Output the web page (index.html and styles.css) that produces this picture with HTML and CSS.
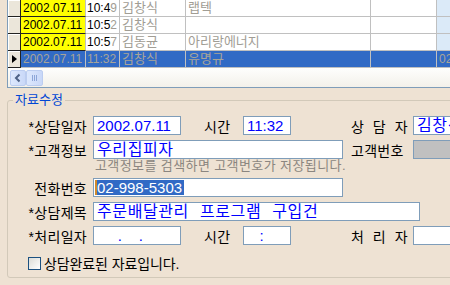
FILE: index.html
```html
<!DOCTYPE html>
<html lang="ko">

<head>
    <meta charset="UTF-8">
    <title>상담내역</title>
    <link rel="stylesheet" href="styles.css">
</head>

<body>
    <div class="grid">
        <div class="row">
            <div class="sel"></div>
            <div class="c date">2002.07.11</div>
            <div class="c time">10:4<span class="dim">9</span></div>
            <div class="c name">김창식</div>
            <div class="c comp">랩텍</div>
            <div class="c blank"></div>
            <div class="c extra"></div>
        </div>
        <div class="row">
            <div class="sel"></div>
            <div class="c date">2002.07.11</div>
            <div class="c time">10:5<span class="dim">2</span></div>
            <div class="c name">김창식</div>
            <div class="c comp"></div>
            <div class="c blank"></div>
            <div class="c extra"></div>
        </div>
        <div class="row">
            <div class="sel"></div>
            <div class="c date">2002.07.11</div>
            <div class="c time">10:5<span class="dim">7</span></div>
            <div class="c name">김동균</div>
            <div class="c comp">아리랑에너지</div>
            <div class="c blank"></div>
            <div class="c extra"></div>
        </div>
        <div class="row current">
            <div class="sel"><span class="arrow"></span></div>
            <div class="c date">2002.07.11</div>
            <div class="c time">11:32</div>
            <div class="c name">김창식</div>
            <div class="c comp">유명규</div>
            <div class="c blank"></div>
            <div class="c extra">02</div>
        </div>
        <div class="hscroll">
            <div class="sbtn">
                <svg width="14" height="14" viewBox="0 0 14 14">
                    <path d="M8.5 3.5 L5 7 L8.5 10.5" fill="none" stroke="#4d6185" stroke-width="2" />
                </svg>
            </div>
            <div class="sthumb">
                <svg width="15" height="14" viewBox="0 0 15 14">
                    <path d="M5.5 4v6M7.5 4v6M9.5 4v6" stroke="#8da6d8" stroke-width="1" />
                </svg>
            </div>
        </div>
    </div>

    <fieldset class="edit">
        <legend>자료수정</legend>
        <div class="frow">
            <span class="lbl">*상담일자</span>
            <div class="box w-date">2002.07.11</div>
            <span class="lbl-mid">시간</span>
            <div class="box w-time">11:32</div>
            <span class="lbl-r spaced">상 담 자</span>
            <div class="box w-rest ko">김창식</div>
        </div>
        <div class="frow">
            <span class="lbl">*고객정보</span>
            <div class="box w-wide ko">우리집피자</div>
            <span class="lbl-r near">고객번호</span>
            <div class="box w-rest off"></div>
        </div>
        <div class="hint">고객정보를 검색하면 고객번호가 저장됩니다.</div>
        <div class="frow">
            <span class="lbl">전화번호</span>
            <div class="box w-wide"><span class="picked">02-998-5303</span></div>
        </div>
        <div class="frow">
            <span class="lbl">*상담제목</span>
            <div class="box w-title ko">주문배달관리 프로그램 구입건</div>
        </div>
        <div class="frow">
            <span class="lbl">*처리일자</span>
            <div class="box w-date">&nbsp;&nbsp;&nbsp;&nbsp;&nbsp;.&nbsp;&nbsp;&nbsp;&nbsp;.</div>
            <span class="lbl-mid">시간</span>
            <div class="box w-time">&nbsp;&nbsp;&nbsp;:</div>
            <span class="lbl-r spaced">처 리 자</span>
            <div class="box w-rest"></div>
        </div>
        <label class="done"><span class="chk"></span>상담완료된 자료입니다.</label>
    </fieldset>
</body>

</html>
```

FILE: styles.css
```css
* {
    margin: 0;
    padding: 0;
    box-sizing: border-box;
}

body {
    width: 450px;
    height: 285px;
    overflow: hidden;
    background-color: #eee2d3;
    font-family: "Liberation Sans", "Noto Sans CJK KR", sans-serif;
    color: #000;
}

/* grid */

.grid {
    margin-left: 7px;
    width: 460px;
    background-color: #fff;
    border-left: 1px solid #7f9db9;
    border-bottom: 1px solid #7f9db9;
}

.row {
    display: flex;
    height: 17px;
    font-size: 12px;
    line-height: 16px;
}

.sel {
    width: 13px;
    flex: none;
    background-color: #ebe6da;
    border-right: 1px solid #222;
    border-bottom: 1px solid #222;
    box-shadow: inset 1px 1px #fff;
    position: relative;
}

.arrow {
    position: absolute;
    left: 4px;
    top: 4px;
    border-left: 5px solid #000;
    border-top: 4px solid transparent;
    border-bottom: 4px solid transparent;
}

.c {
    flex: none;
    white-space: nowrap;
    overflow: hidden;
    border-right: 1px solid #c0c0c0;
    border-bottom: 1px solid #c0c0c0;
    padding-left: 2px;
    color: #a19d94;
}

.date {
    width: 65px;
    background-color: #ffff00;
    color: #000;
    border-bottom-color: #222;
}

.time {
    width: 34px;
    padding-left: 1px;
    color: #000;
}

.name {
    width: 66px;
    font-size: 13px;
}

.comp {
    width: 185px;
    font-size: 13px;
}

.blank {
    width: 66px;
}

.extra {
    width: 40px;
    background-color: #dbeaf8;
}

.dim {
    color: #a19d94;
}

.current .c {
    background-color: #316ac5;
    color: #a8a498;
    border-bottom-color: #c0c0c0;
}

.hscroll {
    height: 19px;
    display: flex;
    padding: 2px 0 0 2px;
    background: linear-gradient(#fefefd, #f3f1ea);
}

.sbtn,
.sthumb {
    width: 16px;
    height: 16px;
    border: 1px solid #bccdf0;
    border-radius: 2px;
    background: linear-gradient(90deg, #dde8fd, #c9d8f8);
    display: flex;
    align-items: center;
    justify-content: center;
}

.sthumb {
    width: 17px;
}

/* edit form */

.edit {
    margin: 5px 0 0 7px;
    width: 460px;
    border: 1px solid #d2c9b9;
    border-radius: 3px;
    padding: 9px 0 7px 2px;
}

.edit legend {
    margin-left: 3px;
    padding: 0 2px;
    font-size: 13px;
    line-height: 14px;
    color: #0046d5;
}

.frow {
    display: flex;
    align-items: center;
    height: 19px;
    margin-top: 5px;
    font-size: 14px;
    letter-spacing: 0.3px;
}

.frow:first-of-type {
    margin-top: 0;
}

.lbl {
    width: 83px;
    flex: none;
    padding-right: 6px;
    text-align: right;
}

.lbl-mid {
    width: 62px;
    flex: none;
    padding-left: 23px;
}

.lbl-r {
    width: 62px;
    flex: none;
    margin-left: 60px;
}

.lbl-r.near {
    margin-left: 8px;
}

.spaced {
    word-spacing: 4.5px;
}

.box {
    flex: none;
    height: 19px;
    border: 1px solid #7f9db9;
    background-color: #fff;
    padding-left: 3px;
    font-size: 15px;
    line-height: 17px;
    letter-spacing: 0;
    color: #0000ff;
    white-space: nowrap;
    overflow: hidden;
}

.box.ko {
    font-size: 16px;
    letter-spacing: 0.6px;
    word-spacing: 6px;
}

.w-date {
    width: 88px;
}

.w-time {
    width: 48px;
}

.w-rest {
    width: 60px;
}

.w-wide {
    width: 250px;
}

.w-title {
    width: 327px;
}

.off {
    background-color: #c0c0c0;
}

.picked {
    display: inline-block;
    line-height: 15px;
    margin-top: 1px;
    padding-right: 2px;
    background-color: #316ac5;
    color: #fff;
    border-left: 2px solid #d08a2c;
    margin-left: -2px;
}

.hint {
    height: 14px;
    padding-left: 85px;
    font-size: 13px;
    line-height: 14px;
    letter-spacing: 0.4px;
    color: #8b8680;
}

.done {
    display: flex;
    align-items: center;
    margin: 11px 0 0 18px;
    height: 14px;
    font-size: 14px;
    letter-spacing: -0.1px;
}

.chk {
    width: 13px;
    height: 13px;
    margin-right: 3px;
    border: 1px solid #1c5180;
    background: linear-gradient(135deg, #dcdcd6, #fff);
}
```
